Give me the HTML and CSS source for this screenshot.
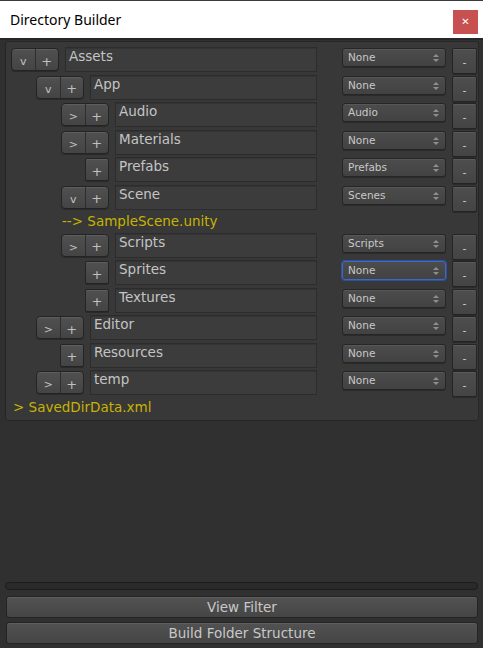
FILE: index.html
```html
<!DOCTYPE html>
<html>
<head>
<meta charset="utf-8">
<link rel="stylesheet" href="styles.css">
</head>
<body>
<div class="window">
  <div class="titlebar">
    <span class="title">Directory Builder</span>
    <span class="close">&#x2715;</span>
  </div>
  <div class="content">
    <div class="panel">
      <div class="row">
        <div class="tree"><span class="indent l0"></span><span class="tg"><span class="h">v</span><span class="h p">+</span></span><span class="field">Assets</span></div>
        <span class="dd">None<i class="arr"></i></span><span class="minus">-</span>
      </div>
      <div class="row">
        <div class="tree"><span class="indent l1"></span><span class="tg"><span class="h">v</span><span class="h p">+</span></span><span class="field">App</span></div>
        <span class="dd">None<i class="arr"></i></span><span class="minus">-</span>
      </div>
      <div class="row">
        <div class="tree"><span class="indent l2"></span><span class="tg"><span class="h">&gt;</span><span class="h p">+</span></span><span class="field">Audio</span></div>
        <span class="dd">Audio<i class="arr"></i></span><span class="minus">-</span>
      </div>
      <div class="row">
        <div class="tree"><span class="indent l2"></span><span class="tg"><span class="h">&gt;</span><span class="h p">+</span></span><span class="field">Materials</span></div>
        <span class="dd">None<i class="arr"></i></span><span class="minus">-</span>
      </div>
      <div class="row">
        <div class="tree"><span class="indent l2"></span><span class="tg solo"><span class="h p">+</span></span><span class="field">Prefabs</span></div>
        <span class="dd">Prefabs<i class="arr"></i></span><span class="minus">-</span>
      </div>
      <div class="row">
        <div class="tree"><span class="indent l2"></span><span class="tg"><span class="h">v</span><span class="h p">+</span></span><span class="field">Scene</span></div>
        <span class="dd">Scenes<i class="arr"></i></span><span class="minus">-</span>
      </div>
      <div class="file l2f">--&gt; SampleScene.unity</div>
      <div class="row">
        <div class="tree"><span class="indent l2"></span><span class="tg"><span class="h">&gt;</span><span class="h p">+</span></span><span class="field">Scripts</span></div>
        <span class="dd">Scripts<i class="arr"></i></span><span class="minus">-</span>
      </div>
      <div class="row">
        <div class="tree"><span class="indent l2"></span><span class="tg solo"><span class="h p">+</span></span><span class="field">Sprites</span></div>
        <span class="dd focus">None<i class="arr"></i></span><span class="minus">-</span>
      </div>
      <div class="row">
        <div class="tree"><span class="indent l2"></span><span class="tg solo"><span class="h p">+</span></span><span class="field">Textures</span></div>
        <span class="dd">None<i class="arr"></i></span><span class="minus">-</span>
      </div>
      <div class="row">
        <div class="tree"><span class="indent l1"></span><span class="tg"><span class="h">&gt;</span><span class="h p">+</span></span><span class="field">Editor</span></div>
        <span class="dd">None<i class="arr"></i></span><span class="minus">-</span>
      </div>
      <div class="row">
        <div class="tree"><span class="indent l1"></span><span class="tg solo"><span class="h p">+</span></span><span class="field">Resources</span></div>
        <span class="dd">None<i class="arr"></i></span><span class="minus">-</span>
      </div>
      <div class="row">
        <div class="tree"><span class="indent l1"></span><span class="tg"><span class="h">&gt;</span><span class="h p">+</span></span><span class="field">temp</span></div>
        <span class="dd">None<i class="arr"></i></span><span class="minus">-</span>
      </div>
      <div class="file root">&gt; SavedDirData.xml</div>
    </div>
    <div class="spacer"></div>
    <div class="scrollbar"></div>
    <div class="btn">View Filter</div>
    <div class="btn">Build Folder Structure</div>
  </div>
</div>
</body>
</html>
```

FILE: styles.css
```css
* { box-sizing: border-box; }
html, body { margin: 0; padding: 0; }
body {
  width: 483px;
  height: 648px;
  overflow: hidden;
  background: #303030;
  font-family: "DejaVu Sans", Verdana, sans-serif;
}
.window {
  display: flex;
  flex-direction: column;
  height: 648px;
}
.titlebar {
  height: 38px;
  flex: none;
  background: #ffffff;
  border-top: 1px solid #3a3a3a;
  display: flex;
  align-items: center;
  justify-content: space-between;
  padding: 0 5px 0 10px;
}
.title {
  font-family: "Noto Sans", "Open Sans", sans-serif;
  font-size: 14px;
  color: #000;
  margin-top: -1px;
}
.close {
  width: 25px;
  height: 24px;
  margin-top: 4px;
  background: #c75050;
  color: #fff;
  font-size: 10px;
  font-weight: bold;
  display: flex;
  align-items: center;
  justify-content: center;
}
.content {
  flex: 1;
  display: flex;
  flex-direction: column;
  background: #303030;
  border-top: 2px solid #262626;
  padding: 1px 0 0 0;
}
.panel {
  margin: 0 4px 0 5px;
  background: #383838;
  border: 1px solid #262626;
  border-radius: 3px;
  padding: 5px 1px 3px 5px;
}
.row {
  display: flex;
  align-items: flex-start;
  height: 27.5px;
}
.tree {
  width: 306px;
  display: flex;
  align-items: flex-start;
  margin-right: 25px;
}
.indent { flex: none; }
.indent.l0 { width: 0; }
.indent.l1 { width: 25px; }
.indent.l2 { width: 50px; }
.tg {
  flex: none;
  display: flex;
  width: 48px;
  height: 23px;
  margin-top: 1px;
  margin-right: 6px;
  border: 1px solid #242424;
  border-radius: 4px;
  background: linear-gradient(#505050, #444444);
  box-shadow: inset 0 1px 0 #5e5e5e, 0 1px 0 #2a2a2a;
}
.tg.solo {
  width: 24px;
  margin-left: 24px;
  border-radius: 2px;
}
.h {
  flex: 1;
  color: #c0c0c0;
  font-size: 11px;
  display: flex;
  align-items: center;
  justify-content: center;
  padding-top: 4px;
}
.h.p {
  font-size: 13px;
  padding-top: 3px;
  border-left: 1px solid #2e2e2e;
}
.tg.solo .h.p { border-left: none; }
.field {
  flex: 1;
  height: 25px;
  background: #3c3c3c;
  border: 1px solid #2c2c2c;
  box-shadow: inset 0 1px 0 #343434;
  color: #c4c4c4;
  font-size: 13.5px;
  line-height: 17px;
  padding-left: 3px;
}
.dd {
  flex: none;
  position: relative;
  width: 104px;
  height: 19px;
  margin-top: 1px;
  margin-right: 6px;
  border: 1px solid #262626;
  border-radius: 3px;
  background: linear-gradient(#4c4c4c, #424242);
  box-shadow: inset 0 1px 0 #575757, 0 1px 0 #2a2a2a;
  color: #c8c8c8;
  font-size: 10.5px;
  line-height: 17px;
  padding-left: 5px;
}
.dd.focus {
  border: 1px solid #3c68c8;
  box-shadow: 0 0 0 1px #2f4f9a;
}
.arr {
  position: absolute;
  right: 6px;
  top: 5px;
  width: 6px;
  height: 8px;
}
.arr::before, .arr::after {
  content: "";
  position: absolute;
  left: 0;
  border-left: 3px solid transparent;
  border-right: 3px solid transparent;
}
.arr::before { top: 0; border-bottom: 3px solid #8e8e8e; }
.arr::after { bottom: 0; border-top: 3px solid #8e8e8e; }
.minus {
  flex: none;
  width: 25px;
  height: 26px;
  margin-top: 1px;
  border: 1px solid #242424;
  border-radius: 2px;
  background: linear-gradient(#4e4e4e, #444444);
  box-shadow: inset 0 1px 0 #5a5a5a, 0 1px 0 #2a2a2a;
  color: #d0d0d0;
  font-size: 11px;
  display: flex;
  align-items: center;
  justify-content: center;
  padding-top: 3px;
}
.file {
  color: #c7b300;
  font-size: 13.5px;
  height: 20.5px;
  line-height: 19px;
}
.file.l2f { padding-left: 51px; }
.file.root { padding-left: 2px; height: 19px; }
.spacer { flex: 1; }
.scrollbar {
  height: 8px;
  margin: 0 5px 6px 5px;
  border: 1px solid #1c1c1c;
  border-radius: 4px;
  background: #2a2a2a;
}
.btn {
  margin: 0 5px 4px 6px;
  height: 22px;
  border: 1px solid #242424;
  border-radius: 3px;
  background: linear-gradient(#525252, #454545);
  box-shadow: inset 0 1px 0 #5e5e5e;
  color: #c8c8c8;
  font-size: 13.5px;
  line-height: 20px;
  text-align: center;
}
```
